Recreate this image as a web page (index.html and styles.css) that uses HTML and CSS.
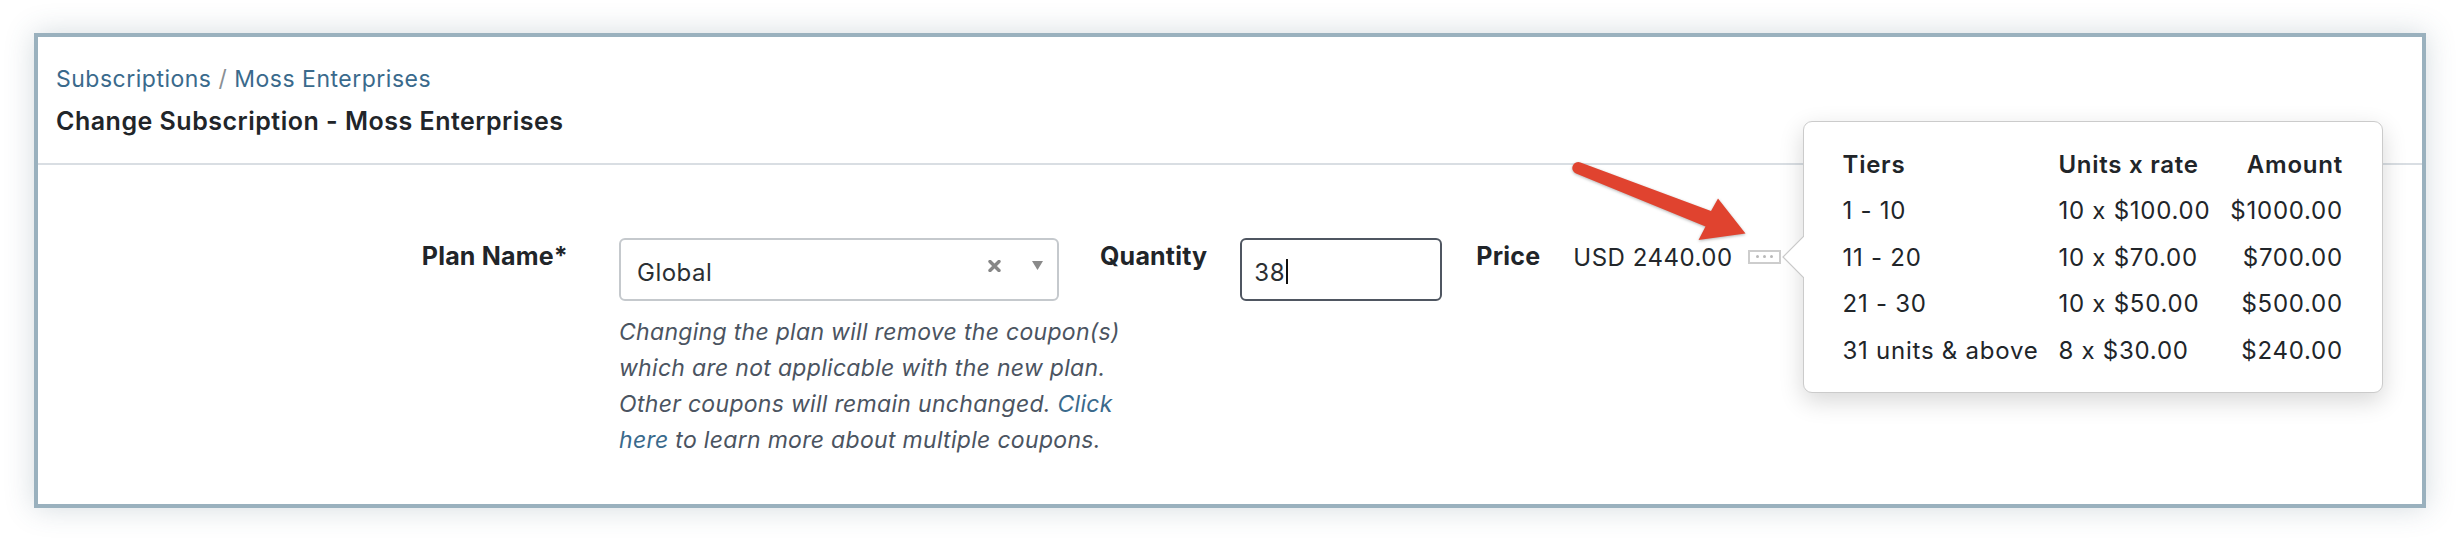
FILE: index.html
```html
<!DOCTYPE html>
<html lang="en">
<head>
<meta charset="utf-8">
<title>Change Subscription - Moss Enterprises</title>
<link rel="stylesheet" href="styles.css">
</head>
<body>
<div class="frame">
  <div class="header">
    <div class="crumbs"><a class="link">Subscriptions</a><span class="sep"> / </span><a class="link">Moss Enterprises</a></div>
    <h1 class="title">Change Subscription - Moss Enterprises</h1>
  </div>
  <div class="content">
    <div class="form-row">
      <label class="label label-plan">Plan Name*</label>
      <div class="plan-col">
        <div class="select">
          <span class="select-value">Global</span>
          <svg class="clear-icon" width="13" height="12" viewBox="0 0 13 12"><path d="M2 1.5 L11 10.5 M11 1.5 L2 10.5" stroke="#878787" stroke-width="3.4" stroke-linecap="round"/></svg>
          <svg class="caret-icon" width="11" height="9" viewBox="0 0 11 9"><polygon points="0,0 11,0 5.5,9" fill="#8a8a8a"/></svg>
        </div>
        <p class="help">Changing the plan will remove the coupon(s) which are not applicable with the new plan. Other coupons will remain unchanged. <a class="link">Click here</a> to learn more about multiple coupons.</p>
      </div>
      <label class="label label-qty">Quantity</label>
      <div class="input"><span class="input-value">38</span><span class="cursor"></span></div>
      <label class="label label-price">Price</label>
      <span class="price">USD 2440.00</span>
      <span class="more-wrap">
        <span class="more"><i class="dot"></i><i class="dot"></i><i class="dot"></i></span>
        <div class="popover">
          <svg class="notch" width="22" height="42" viewBox="0 0 22 42"><polygon points="22,0 1,21 22,42" fill="#fff"/><polyline points="22,0 1,21 22,42" fill="none" stroke="#c9c9c9" stroke-width="1.2"/></svg>
          <table class="tiers">
            <thead>
              <tr><th>Tiers</th><th>Units x rate</th><th class="num">Amount</th></tr>
            </thead>
            <tbody>
              <tr><td>1 - 10</td><td>10 x $100.00</td><td class="num">$1000.00</td></tr>
              <tr><td>11 - 20</td><td>10 x $70.00</td><td class="num">$700.00</td></tr>
              <tr><td>21 - 30</td><td>10 x $50.00</td><td class="num">$500.00</td></tr>
              <tr><td>31 units &amp; above</td><td>8 x $30.00</td><td class="num">$240.00</td></tr>
            </tbody>
          </table>
        </div>
      </span>
    </div>
  </div>
</div>
<svg class="annotation" width="2460" height="542" viewBox="0 0 2460 542">
  <path d="M1580.5 162.5 L1711 211 L1718 198.5 L1745.5 233.5 L1698.5 240 L1705.5 226.5 L1576 173.5 A5.7 5.7 0 0 1 1580.5 162.5 Z" fill="#e0432f"/>
</svg>
</body>
</html>
```
FILE: styles.css
```css
* { box-sizing: border-box; }
html, body { margin: 0; background: #fff; }
body {
  padding: 33px 34px 0;
  font-family: Inter, "Noto Sans", "Liberation Sans", sans-serif;
  color: #212529;
  position: relative;
  width: 2460px;
  height: 542px;
  overflow: hidden;
}
.link { color: #3a6a8c; text-decoration: none; cursor: pointer; }
.frame {
  border: 4px solid #9ab1be;
  background: #fff;
  box-shadow: 0 0 28px rgba(60, 90, 110, 0.22);
}
.header {
  padding: 20.6px 18px 21.4px;
  border-bottom: 2px solid #d9dee3;
}
.crumbs { font-size: 23px; line-height: 42px; letter-spacing: 0.5px; }
.sep { color: #8a8f94; }
.title { margin: 0; font-size: 25px; line-height: 42px; font-weight: 600; letter-spacing: 0.5px; }
.content { padding: 73px 0 46px; }
.form-row { display: flex; align-items: flex-start; }
.label {
  flex: none;
  font-weight: 700;
  font-size: 25px;
  line-height: 33px;
  padding-top: 2.4px;
  letter-spacing: 0.2px;
}
.label-plan { width: 530px; text-align: right; margin-right: 51px; }
.label-qty { margin-left: 41px; margin-right: 33px; }
.label-price { margin-left: 34px; margin-right: 33px; }
.plan-col { flex: none; width: 440px; }
.select {
  height: 63px;
  border: 2px solid #c5c9cd;
  border-radius: 6px;
  display: flex;
  align-items: center;
  padding: 6px 14px 0 16px;
  font-size: 24px;
  letter-spacing: 0.5px;
  color: #2b2f33;
}
.select-value { flex: 1; }
.clear-icon { margin-top: -12px; margin-right: 31px; }
.caret-icon { margin-top: -14px; }
.help {
  width: 530px;
  margin: 12.6px 0 0;
  font-size: 23px;
  line-height: 36px;
  letter-spacing: 0.3px;
  font-style: italic;
  color: #4b5461;
}
.input {
  flex: none;
  width: 202px;
  height: 63px;
  border: 2px solid #4f5661;
  border-radius: 6px;
  display: flex;
  align-items: center;
  padding: 6px 12px 0;
  font-size: 24px;
  letter-spacing: 0.5px;
  color: #2b2f33;
}
.cursor { width: 2px; height: 25px; background: #111; margin-left: 1px; margin-top: -2px; }
.price {
  flex: none;
  font-size: 24px;
  line-height: 33px;
  padding-top: 3px;
  letter-spacing: 0.5px;
  color: #23272b;
}
.more-wrap { position: relative; flex: none; margin-left: 15px; margin-top: 12px; }
.more {
  display: flex;
  align-items: center;
  justify-content: center;
  gap: 4px;
  width: 33px;
  height: 14px;
  border: 2px solid #cdcdcd;
}
.dot { display: block; width: 3px; height: 3px; border-radius: 50%; background: #b9b9b9; }
.popover {
  position: absolute;
  left: 55px;
  top: -129px;
  background: #fff;
  border: 1px solid #cbcbcb;
  border-radius: 9px;
  box-shadow: 0 8px 24px rgba(0, 0, 0, 0.16);
  padding: 18.8px 39px;
  white-space: nowrap;
}
.notch { position: absolute; left: -22px; top: 114px; }
.tiers { border-collapse: collapse; font-size: 24px; line-height: 33px; letter-spacing: 0.75px; color: #212529; }
.tiers th, .tiers td { padding: 7px 20px 6.5px 0; text-align: left; }
.tiers th { font-weight: 600; }
.tiers .num { text-align: right; padding-right: 0; }
.annotation {
  position: absolute;
  left: 0;
  top: 0;
  pointer-events: none;
  filter: drop-shadow(0 1px 1.5px rgba(0, 0, 0, 0.3));
}
```
